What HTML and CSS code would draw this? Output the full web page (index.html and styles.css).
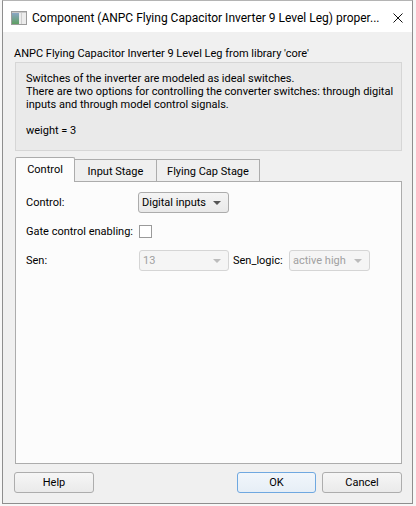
FILE: index.html
```html
<!DOCTYPE html>
<html lang="en">
<head>
    <meta charset="UTF-8">
    <meta name="viewport" content="width=device-width, initial-scale=1.0">
    <title>Component properties</title>
    <link rel="stylesheet" href="styles.css">
</head>
<body>

    <div class="window">

        <!-- Title bar -->
        <div class="titlebar">
            <svg class="app-icon" viewBox="0 0 16 14">
                <defs>
                    <linearGradient id="iconFill" x1="0" y1="0" x2="0" y2="1">
                        <stop offset="0" stop-color="#8aa6c4"/>
                        <stop offset="1" stop-color="#5e9f62"/>
                    </linearGradient>
                </defs>
                <rect x="0.5" y="0.5" width="15" height="13" fill="#ececec" stroke="#9c9c9c"/>
                <rect x="1" y="1" width="14" height="1" fill="#c8c8c8"/>
                <rect x="1" y="2" width="7" height="11" fill="url(#iconFill)"/>
                <line x1="10.5" y1="2" x2="10.5" y2="13" stroke="#cfcfcf"/>
            </svg>
            <span class="title">Component (ANPC Flying Capacitor Inverter 9 Level Leg) proper...</span>
            <svg class="close" viewBox="0 0 10 10">
                <path d="M0.5 0.5L9.5 9.5M9.5 0.5L0.5 9.5" stroke="#111" stroke-width="1"/>
            </svg>
        </div>

        <div class="content">
            <div class="lib-name">ANPC Flying Capacitor Inverter 9 Level Leg from library 'core'</div>

            <!-- Description -->
            <div class="description">
                <p>Switches of the inverter are modeled as ideal switches.<br>
                There are two options for controlling the converter switches: through digital<br>
                inputs and through model control signals.</p>
                <p class="weight">weight = 3</p>
            </div>

            <!-- Tabs -->
            <div class="tabs">
                <div class="tab-bar">
                    <div class="tab active">Control</div>
                    <div class="tab">Input Stage</div>
                    <div class="tab">Flying Cap Stage</div>
                </div>
                <div class="tab-pane">
                    <div class="form">
                        <span>Control:</span>
                        <div class="combo combo-control"><span>Digital inputs</span><span class="arrow"></span></div>

                        <span>Gate control enabling:</span>
                        <div class="checkbox"></div>

                        <span>Sen:</span>
                        <div class="sen-row">
                            <div class="combo disabled combo-sen"><span>13</span><span class="arrow"></span></div>
                            <span class="sen-logic-label">Sen_logic:</span>
                            <div class="combo disabled combo-logic"><span>active high</span><span class="arrow"></span></div>
                        </div>
                    </div>
                </div>
            </div>

            <!-- Buttons -->
            <div class="buttons">
                <button class="button help">Help</button>
                <button class="button default">OK</button>
                <button class="button">Cancel</button>
            </div>
        </div>
    </div>

</body>
</html>
```
FILE: styles.css
```css
body {
    margin: 0;
    background-color: #f7f7f7;
    font-family: Roboto, "Liberation Sans", sans-serif;
    font-size: 11px;
    color: #000;
}

.window {
    margin-left: 2px;
    width: 411px;
    height: 504px;
    box-sizing: border-box;
    border: 1px solid #8e8e8e;
    border-top-color: #b4b4b4;
    background-color: #f0f0f0;
    display: flex;
    flex-direction: column;
}

/* Title bar */
.titlebar {
    height: 31px;
    flex-shrink: 0;
    box-sizing: border-box;
    padding-top: 2px;
    background-color: #fff;
    display: flex;
    align-items: center;
}

.app-icon {
    width: 16px;
    height: 14px;
    margin-left: 8px;
    margin-right: 5px;
}

.title {
    flex: 1;
    font-size: 12px;
    white-space: nowrap;
}

.close {
    width: 10px;
    height: 10px;
    margin-right: 9px;
}

/* Content */
.content {
    flex: 1;
    display: flex;
    flex-direction: column;
    padding: 15px 10px 10px 11px;
}

.lib-name {
    line-height: 13px;
}

.description {
    margin: 2px 0 0 1px;
    padding: 9px 10px 13px;
    background-color: #eaeaea;
    border: 1px solid #d6d6d6;
    line-height: 13px;
    white-space: nowrap;
}

.description p {
    margin: 0;
}

.description .weight {
    margin-top: 13px;
}

/* Tabs */
.tabs {
    flex: 1;
    margin: 6px 0 0 1px;
    display: flex;
    flex-direction: column;
}

.tab-bar {
    display: flex;
    align-items: flex-end;
    margin-bottom: -1px;
    position: relative;
    z-index: 1;
}

.tab {
    height: 23px;
    box-sizing: border-box;
    margin-left: -1px;
    padding: 2px 0 0;
    line-height: 19px;
    text-align: center;
    border: 1px solid #acacac;
    background-color: #efefef;
}

.tab:nth-child(2) {
    width: 83px;
}

.tab:nth-child(3) {
    width: 104px;
}

.tab.active {
    width: 60px;
    height: 25px;
    margin-left: 0;
    border-bottom: none;
    border-radius: 2px 2px 0 0;
    background-color: #fcfcfc;
}

.tab-pane {
    flex: 1;
    border: 1px solid #acacac;
    background-color: #fcfcfc;
    padding: 10px;
}

.form {
    display: grid;
    grid-template-columns: 112px auto;
    grid-auto-rows: 21px;
    row-gap: 8px;
    align-items: center;
    justify-items: start;
}

.combo {
    height: 21px;
    box-sizing: border-box;
    display: flex;
    align-items: center;
    justify-content: space-between;
    padding: 0 7px 0 3px;
    border: 1px solid #acacac;
    border-radius: 3px;
    background: linear-gradient(#f4f4f4, #e9e9e9);
}

.combo-control {
    width: 91px;
}

.combo.disabled {
    border-color: #d5d5d5;
    background: #f5f5f5;
    color: #a0a0a0;
}

.combo-sen {
    width: 90px;
    margin-left: 1px;
}

.combo-logic {
    width: 81px;
}

.arrow {
    width: 0;
    height: 0;
    border-left: 4px solid transparent;
    border-right: 4px solid transparent;
    border-top: 4px solid #555;
}

.combo.disabled .arrow {
    border-top-color: #bcbcbc;
}

.checkbox {
    width: 13px;
    height: 13px;
    box-sizing: border-box;
    margin-left: 1px;
    border: 1px solid #9a9a9a;
    background-color: #fff;
}

.sen-row {
    display: flex;
    align-items: center;
}

.sen-logic-label {
    width: 56px;
    margin-left: 4px;
}

/* Buttons */
.buttons {
    display: flex;
    gap: 6px;
    margin-top: 8px;
}

.button {
    width: 80px;
    height: 21px;
    padding: 0;
    font: inherit;
    color: #000;
    border: 1px solid #adadad;
    border-radius: 3px;
    background: linear-gradient(#f6f6f6, #eaeaea);
}

.button.help {
    margin-right: auto;
}

.button.default {
    width: 79px;
    border-color: #6fa8e0;
    background: linear-gradient(#f1f6fb, #e6eef6);
}
```
